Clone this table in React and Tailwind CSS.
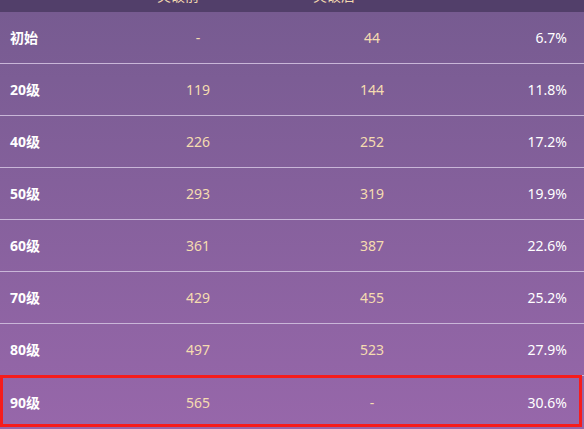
const rows = [
  ["初始", "-", "44", "6.7%"],
  ["20级", "119", "144", "11.8%"],
  ["40级", "226", "252", "17.2%"],
  ["50级", "293", "319", "19.9%"],
  ["60级", "361", "387", "22.6%"],
  ["70级", "429", "455", "25.2%"],
  ["80级", "497", "523", "27.9%"],
  ["90级", "565", "-", "30.6%"],
];

export default function App() {
  return (
    <div
      className="w-[584px] h-[429px] overflow-hidden bg-[#8a62a0] text-[14px]"
      style={{ fontFamily: '"Microsoft YaHei", "Noto Sans", "Noto Sans CJK SC", sans-serif' }}
    >
      <div className="h-[12px] overflow-hidden bg-[#523f6a]">
        <div className="h-[34px] -mt-[22px] grid grid-cols-[157px_156px_1fr] items-center text-[#f3d9b0]">
          <div></div>
          <div>突破前</div>
          <div>突破后</div>
        </div>
      </div>
      <div className="h-[417px] bg-gradient-to-b from-[#775b91] to-[#9767aa]">
        {rows.map((r, i) => {
          const last = i === rows.length - 1;
          return (
            <div
              key={i}
              className={
                "relative h-[52px] grid grid-cols-[116px_164px_184px_1fr] items-center " +
                (last ? "" : "border-b border-[#c9b6d8]")
              }
            >
              <div className="pl-[10px] font-bold text-white">{r[0]}</div>
              <div className="text-center text-[#f5dcb0]">{r[1]}</div>
              <div className="text-center text-[#f5dcb0]">{r[2]}</div>
              <div className="text-right pr-[17px] text-white">{r[3]}</div>
              {last && (
                <div className="absolute left-0 top-[-1px] right-[2px] bottom-[1px] border-[3px] border-[#f61c1c]"></div>
              )}
            </div>
          );
        })}
      </div>
    </div>
  );
}
